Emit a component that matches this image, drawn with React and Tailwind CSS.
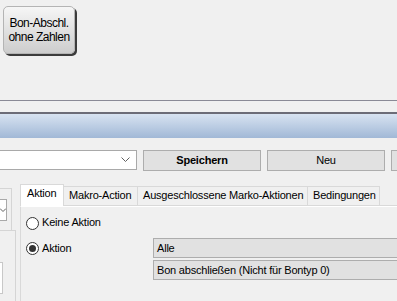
import React from "react";

const Radio = ({ checked }) => (
  <div className="w-[13px] h-[13px] shrink-0 rounded-full border border-[#333] bg-white flex items-center justify-center">
    {checked && <div className="w-[7px] h-[7px] rounded-full bg-[#333]" />}
  </div>
);

const Tab = ({ label, width, active }) =>
  active ? (
    <div
      className="h-[22px] bg-white border-l border-t border-r border-[#d9d9d9] pl-[6px] pt-[2px] leading-[13px]"
      style={{ width }}
    >
      {label}
    </div>
  ) : (
    <div
      className="h-[20px] bg-[#f0f0f0] border-t border-r border-b border-[#d9d9d9] pl-[5px] pt-[2px] leading-[13px] whitespace-nowrap"
      style={{ width }}
    >
      {label}
    </div>
  );

const Field = ({ children }) => (
  <div className="h-[20px] w-[260px] bg-[#e1e1e1] border border-[#adadad] pl-[3px] flex items-center leading-[13px] whitespace-nowrap">
    {children}
  </div>
);

const App = () => {
  return (
    <div className="w-[397px] h-[301px] overflow-hidden bg-[#f0f0f0] text-black text-[11px] tracking-[-0.2px] font-['Liberation_Sans',Arial,sans-serif]">
      {/* top button area */}
      <div className="h-[100px] pl-[3px] pt-[6px]">
        <div className="w-[72px] h-[48px] rounded-[5px] border border-[#b4b4b4] bg-gradient-to-b from-[#f6f6f6] to-[#cdcdcd] shadow-[2px_2px_0_#3c3c3c] flex flex-col items-center justify-center text-[12px] leading-[14px] tracking-[-0.5px]">
          <span>Bon-Abschl.</span>
          <span>ohne Zahlen</span>
        </div>
      </div>
      <div className="h-px bg-[#8a8a96]" />
      <div className="h-[11px]" />
      <div className="h-[2px] bg-[#6c6c77]" />
      <div className="h-[24px] bg-gradient-to-b from-[#d8e3f1] to-[#a1b8d6]" />

      {/* toolbar */}
      <div className="mt-[12px] flex items-start gap-[6px] h-[21px]">
        <div className="-ml-px w-[138px] h-[20px] bg-white border border-[#a9a9a9] flex items-center justify-end pr-[6px] shrink-0">
          <svg width="9" height="6" viewBox="0 0 9 6" fill="none">
            <path d="M0.5 0.5 L4.5 4.5 L8.5 0.5" stroke="#606060" strokeWidth="1" />
          </svg>
        </div>
        <div className="w-[118px] h-[21px] shrink-0 bg-[#e1e1e1] border border-[#adadad] flex items-center justify-center font-bold">
          Speichern
        </div>
        <div className="w-[118px] h-[21px] shrink-0 bg-[#e1e1e1] border border-[#adadad] flex items-center justify-center">
          Neu
        </div>
        <div className="w-[40px] h-[21px] shrink-0 bg-[#e1e1e1] border border-[#adadad]" />
      </div>

      {/* lower section */}
      <div className="flex h-[130px]">
        {/* left strip */}
        <div className="w-[20px] shrink-0 flex flex-col">
          <div className="mt-[17px] w-[12px] h-[42px] border-t border-r border-[#d5d5d5] pt-[10px]">
            <div className="w-[8px] h-[22px] -ml-px bg-white border border-[#a9a9a9] flex items-center justify-end overflow-hidden">
              <svg width="6" height="5" viewBox="0 0 6 5" fill="none">
                <path d="M0 0.5 L3 3.5 L6 0.5" stroke="#606060" strokeWidth="1" />
              </svg>
            </div>
          </div>
          <div className="w-[16px] flex-1 border-t border-r border-[#d5d5d5] pt-[31px]">
            <div className="w-[4px] h-[32px] -ml-px bg-white border border-[#c8c8c8]" />
          </div>
        </div>

        {/* tab control */}
        <div className="flex-1 flex flex-col mt-[13px]">
          <div className="flex items-end h-[22px] shrink-0">
            <Tab label="Aktion" width={44} active />
            <Tab label="Makro-Action" width={74} />
            <Tab label="Ausgeschlossene Marko-Aktionen" width={170} />
            <Tab label="Bedingungen" width={72} />
            <div className="flex-1 h-[20px] border-b border-[#d9d9d9]" />
          </div>
          <div className="flex-1 border-l border-[#d9d9d9] border-t border-t-white pl-[5px]">
            <div className="mt-[10px] flex items-start gap-[3px]">
              <Radio />
              <span className="leading-[13px] -mt-px">Keine Aktion</span>
            </div>
            <div className="mt-[8px] flex items-start">
              <div className="w-[127px] shrink-0 mt-[4px] flex items-start gap-[3px]">
                <Radio checked />
                <span className="leading-[13px] mt-[0px]">Aktion</span>
              </div>
              <div className="flex flex-col gap-[2px]">
                <Field>Alle</Field>
                <Field>Bon abschließen (Nicht für Bontyp 0)</Field>
              </div>
            </div>
          </div>
        </div>
      </div>
    </div>
  );
};

export default App;
